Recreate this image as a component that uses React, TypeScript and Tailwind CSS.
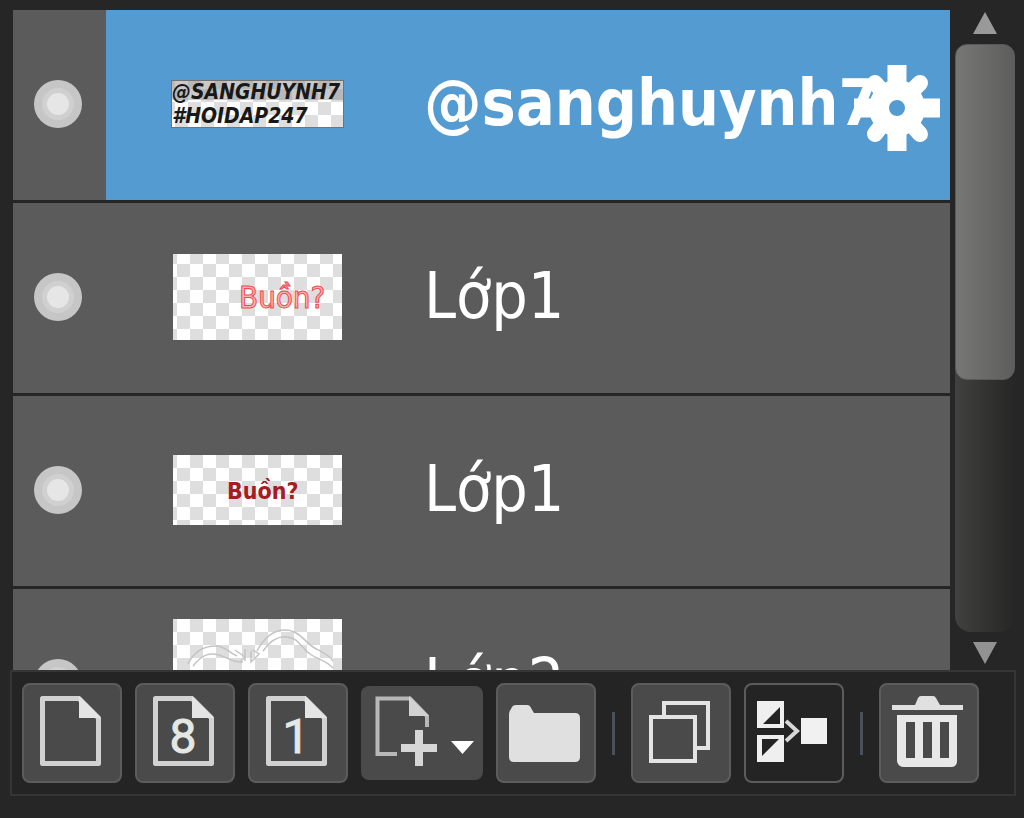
import { useState } from 'react'
import type { ReactNode } from 'react'
import clsx from 'clsx'

type Layer = {
  id: number
  name: string
  thumb: ReactNode
}

const CELL = 13

// Transparency checkerboard with the layer content drawn on top
function Thumb({ id, w = 169, h, top = 0, children }: { id: string; w?: number; h: number; top?: number; children: ReactNode }) {
  return (
    <svg width={w} height={h} viewBox={`0 0 ${w} ${h}`} className="block" aria-hidden="true">
      <defs>
        <pattern id={id} x={4} y={top} width={CELL * 2} height={CELL * 2} patternUnits="userSpaceOnUse">
          <rect width={CELL * 2} height={CELL * 2} fill="#ffffff" />
          <rect x={CELL} width={CELL} height={CELL} fill="#dedede" />
          <rect y={CELL} width={CELL} height={CELL} fill="#dedede" />
        </pattern>
      </defs>
      <rect width={w} height={h} fill={`url(#${id})`} />
      {children}
    </svg>
  )
}

const LAYERS: Layer[] = [
  {
    id: 1,
    name: '@sanghuynh7',
    thumb: (
      <Thumb id="check-1" w={173} h={48} top={-4}>
        <rect width={173} height={20} fill="#8a8a8a" opacity={0.45} />
        <g fontFamily="'DejaVu Sans Condensed', 'DejaVu Sans', sans-serif" fontStyle="italic" fontWeight={700} fontSize={21} fill="#181818">
          <text x={1} y={19}>@SANGHUYNH7</text>
          <text x={1} y={43}>#HOIDAP247</text>
        </g>
        <rect x={0.5} y={0.5} width={172} height={47} fill="none" stroke="#77716b" />
      </Thumb>
    ),
  },
  {
    id: 2,
    name: 'Lớp1',
    thumb: (
      <Thumb id="check-2" h={86} top={-3}>
        <text x={66} y={54} fontFamily="'DejaVu Sans Condensed', sans-serif" fontWeight={400} fontSize={31} fill="#ffb3b3" stroke="#ee4b4f" strokeWidth={1}>Buồn?</text>
      </Thumb>
    ),
  },
  {
    id: 3,
    name: 'Lớp1',
    thumb: (
      <Thumb id="check-3" h={70}>
        <text x={54} y={44} fontFamily="'DejaVu Sans Condensed', sans-serif" fontWeight={700} fontSize={23} fill="#a51d22">Buồn?</text>
      </Thumb>
    ),
  },
  {
    id: 4,
    name: 'Lớp2',
    thumb: (
      <Thumb id="check-4" h={128}>
        <g fill="none" stroke="#c4c4c4" strokeWidth={1.5}>
          <path d="M15 45C22 30 34 27 43 27C52 27 57 34 64 37M20 47C30 34 38 34 46 36C54 38 60 44 70 43M62 31L72 38L67 43M72 30V42M78 32V43L86 35L80 31" />
          <path d="M84 32C92 17 102 11 112 11C126 11 132 23 140 28C148 33 154 34 160 42M90 32C97 22 106 17 114 18C126 19 128 29 137 35C145 41 153 41 160 49" />
        </g>
      </Thumb>
    ),
  },
]

function VisibilityDot() {
  return (
    <svg width="48" height="48" viewBox="0 0 48 48" aria-hidden="true">
      <circle cx="24" cy="24" r="24" fill="#c6c6c6" />
      <circle cx="24" cy="24" r="16" fill="#d0d0d0" />
      <circle cx="24" cy="24" r="11" fill="#e6e6e6" />
    </svg>
  )
}

function GearIcon() {
  return (
    <svg width="86" height="86" viewBox="0 0 86 86" fill="none" stroke="#ffffff" aria-hidden="true">
      <circle cx="43" cy="43" r="18" strokeWidth="20" />
      <path d="M43 0V20M43 66V86M0 43H20M66 43H86" strokeWidth="19" />
      <path d="M21 18L28 26M66 18L58 26M21 69L28 60M66 69L58 60" strokeWidth="16" strokeLinecap="round" />
    </svg>
  )
}

function PageIcon({ digit }: { digit?: string }) {
  return (
    <svg width="100" height="100" viewBox="0 0 100 100" aria-hidden="true">
      <path d="M20.500 15.500H57L76.500 35V80.500H20.500Z" fill="none" stroke="#d2d2d2" strokeWidth="5" strokeLinejoin="round" />
      <path d="M57 13L79 35H57Z" fill="#e4e4e4" />
      {digit && (
        <text x="48" y="70" textAnchor="middle" fontFamily="Roboto, 'Liberation Sans', sans-serif" fontSize="48" fill="#e4e7e2" stroke="#e4e7e2" strokeWidth="1">{digit}</text>
      )}
    </svg>
  )
}

function AddPageIcon() {
  return (
    <svg width="122" height="94" viewBox="0 0 122 94" aria-hidden="true">
      <path d="M36 68H16.500V12.500H49L66 30V41" fill="none" stroke="#b8b8b8" strokeWidth="4" />
      <path d="M48 10L68 30H48Z" fill="#d2d2d2" />
      <path d="M58 44V80M40 62H76" stroke="#d6d6d6" strokeWidth="8" />
      <path d="M90 55H113L101.500 68Z" fill="#ffffff" />
    </svg>
  )
}

function FolderIcon() {
  return (
    <svg width="100" height="100" viewBox="0 0 100 100" aria-hidden="true">
      <path d="M13 74V31Q13 28 15 26L16 24Q17 22 20 22H31Q34 22 35 25L38 30H79Q84 30 84 35V74Q84 79 79 79H18Q13 79 13 74Z" fill="#e0e0e0" />
    </svg>
  )
}

function DuplicateIcon() {
  return (
    <svg width="100" height="100" viewBox="0 0 100 100" fill="none" stroke="#e4e4e4" strokeWidth="4" aria-hidden="true">
      <path d="M33 32V20H77V65H64" />
      <rect x="20" y="34" width="44" height="44" />
    </svg>
  )
}

function MergeIcon() {
  return (
    <svg width="100" height="100" viewBox="0 0 100 100" aria-hidden="true">
      <rect x="13" y="18" width="27" height="27" fill="#efefef" />
      <path d="M36 24V41H19Z" fill="#242424" />
      <rect x="13" y="52" width="27" height="27" fill="#efefef" />
      <path d="M18 56H35L18 73Z" fill="#242424" />
      <path d="M42 38L53 48L42 58" fill="none" stroke="#d8d8d8" strokeWidth="4" />
      <rect x="57" y="35" width="26" height="26" fill="#f1f1f1" />
    </svg>
  )
}

function TrashIcon() {
  return (
    <svg width="100" height="100" viewBox="0 0 100 100" aria-hidden="true">
      <path d="M36 22L39 15Q40 13 42 13H54Q56 13 57 15L61 22H84V27H13V22Z" fill="#e0e0e0" />
      <path d="M18 32H78V78Q78 84 72 84H25Q19 84 18 78ZM27 39V75H36V39ZM44 39V75H53V39ZM61 39V75H70V39Z" fill="#e8e8e8" fillRule="evenodd" />
    </svg>
  )
}

function ToolButton({ label, pressed, children }: { label: string; pressed?: boolean; children: ReactNode }) {
  return (
    <button
      type="button"
      aria-label={label}
      className={clsx(
        'flex size-[100px] shrink-0 items-center justify-center rounded-lg border-2 border-[#5c5c5c]',
        pressed ? 'bg-[#242424]' : 'bg-[#4a4a4a]',
      )}
    >
      <span className="shrink-0">{children}</span>
    </button>
  )
}

function Divider() {
  return (
    <div className="flex w-[9px] shrink-0 justify-center">
      <span className="h-[43px] w-[3px] bg-[#4a5058]" />
    </div>
  )
}

export default function App() {
  const [selected, setSelected] = useState(1)

  return (
    <main className="min-h-screen overflow-hidden bg-[#262626] pt-[10px] pr-2 pl-[10px] font-['DejaVu_Sans_Condensed','DejaVu_Sans',sans-serif]">

      {/* Layer list */}
      <section className="flex h-[660px] pl-[3px]">
        <ul className="min-w-0 flex-1 overflow-hidden">
          {LAYERS.map(layer => {
            const active = layer.id === selected
            return (
              <li key={layer.id} className="flex h-[193px] border-b-3 border-[#252525] bg-[#5b5b5b]">
                <button type="button" aria-label={`Toggle ${layer.name}`} className="flex w-[93px] shrink-0 items-center justify-center pr-[3px] pb-[3px]">
                  <VisibilityDot />
                </button>
                <div className={clsx('relative flex min-w-0 flex-1', active && 'bg-[#549bd1]')}>
                  <button
                    type="button"
                    onClick={() => setSelected(layer.id)}
                    className="flex min-w-0 flex-1 items-center text-left text-white"
                  >
                    <span className="flex w-[302px] shrink-0 justify-center pb-[2px]">{layer.thumb}</span>
                    <span className={clsx('pb-1 pl-4 text-[64px] leading-none', active && 'font-bold')}>{layer.name}</span>
                  </button>
                  {active && (
                    <button type="button" aria-label="Layer settings" className="absolute inset-y-0 right-[10px] pt-[6px]">
                      <GearIcon />
                    </button>
                  )}
                </div>
              </li>
            )
          })}
        </ul>

        {/* Scroll bar */}
        <div className="flex w-[66px] shrink-0 flex-col items-center pl-[4px]">
          <button type="button" aria-label="Scroll up" className="flex h-[34px] items-start pt-[2px]">
            <svg width="26" height="22" viewBox="0 0 26 22" aria-hidden="true">
              <path d="M13 0L25 22H1Z" fill="#999999" />
            </svg>
          </button>
          <div className="w-[60px] flex-1 rounded-2xl bg-linear-to-r from-[#41413f] to-[#262626]">
            <div className="h-[336px] rounded-xl border border-[#5a5a5a] bg-linear-to-r from-[#777775] to-[#5d5d5d]" />
          </div>
          <button type="button" aria-label="Scroll down" className="flex h-[38px] items-start pt-[10px]">
            <svg width="26" height="22" viewBox="0 0 26 22" aria-hidden="true">
              <path d="M1 0H25L13 22Z" fill="#929292" />
            </svg>
          </button>
        </div>
      </section>

      {/* Toolbar */}
      <footer className="flex items-center gap-[13px] border-2 border-[#353535] bg-[#242424] px-[10px] py-[11px]">
        <ToolButton label="New layer"><PageIcon /></ToolButton>
        <ToolButton label="New 8-bit layer"><PageIcon digit="8" /></ToolButton>
        <ToolButton label="New 1-bit layer"><PageIcon digit="1" /></ToolButton>
        <button type="button" aria-label="Add layer" className="flex h-[94px] w-[122px] shrink-0 items-center justify-center rounded-lg bg-[#4a4a4a]">
          <AddPageIcon />
        </button>
        <ToolButton label="New folder"><FolderIcon /></ToolButton>
        <Divider />
        <ToolButton label="Duplicate layer"><DuplicateIcon /></ToolButton>
        <ToolButton label="Merge layers" pressed><MergeIcon /></ToolButton>
        <Divider />
        <ToolButton label="Delete layer"><TrashIcon /></ToolButton>
      </footer>
    </main>
  )
}
